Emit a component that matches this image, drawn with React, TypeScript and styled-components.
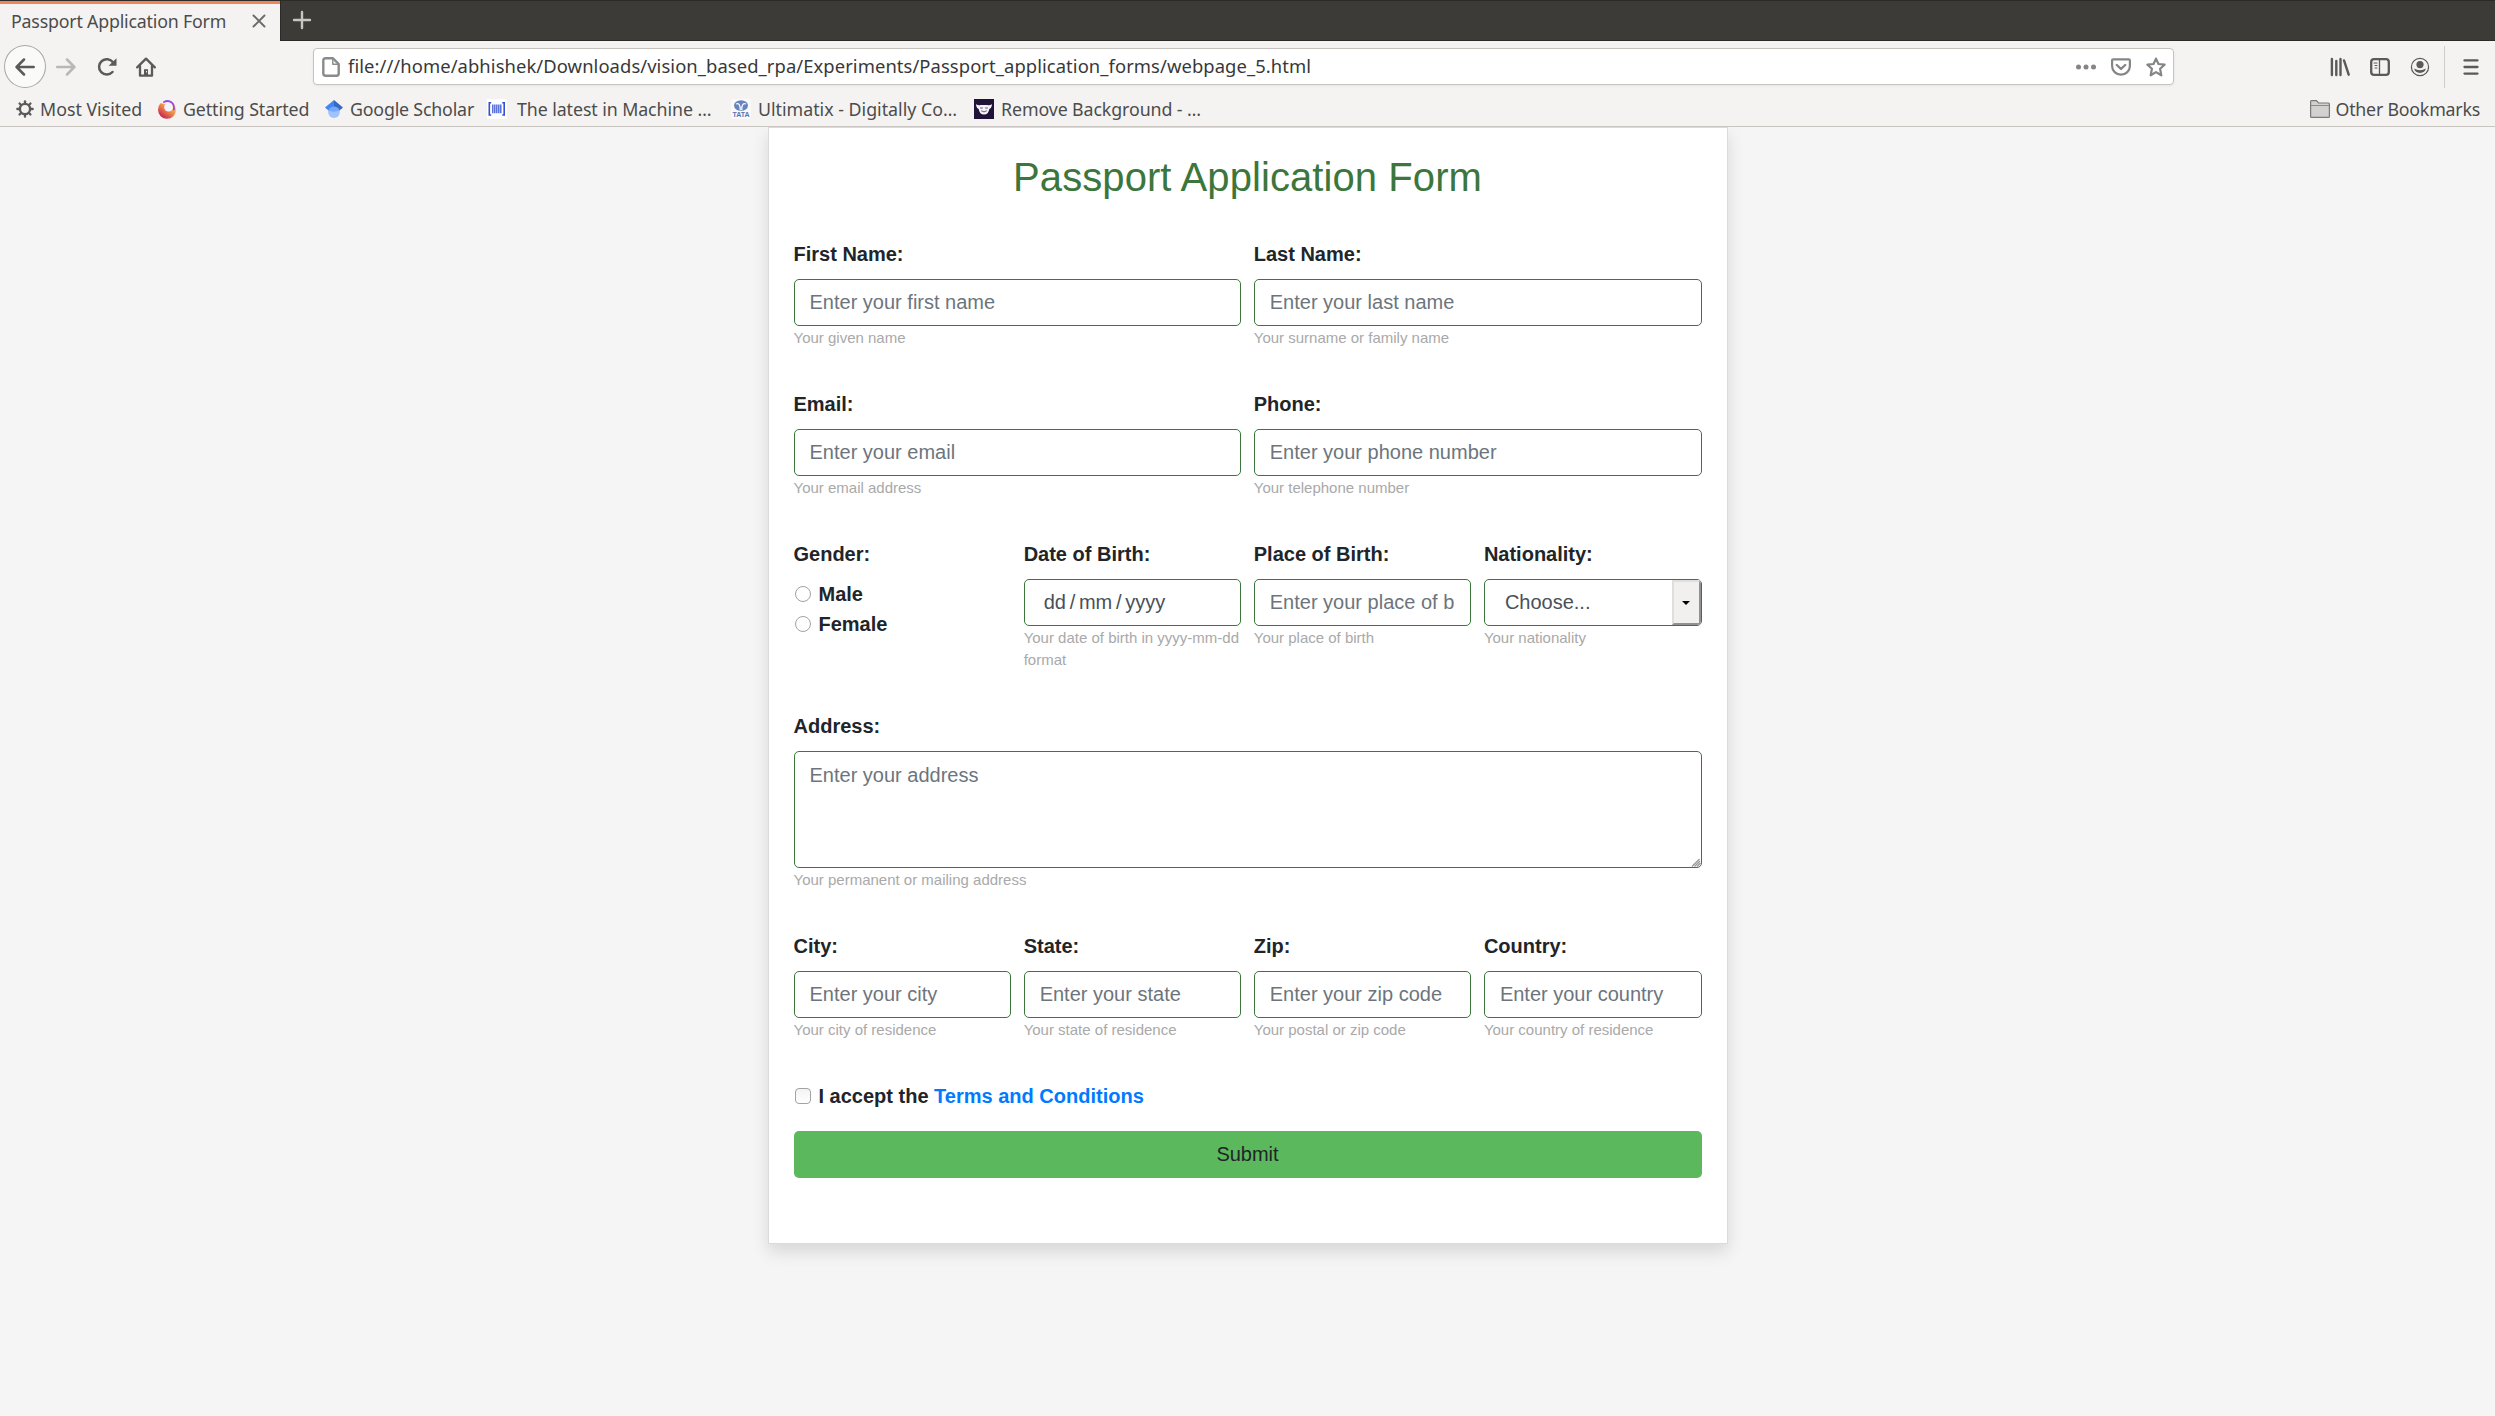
import React from 'react';
import styled, { createGlobalStyle, css } from 'styled-components';

const Global = createGlobalStyle`
  * { box-sizing: border-box; }
  body { margin: 0; background: #f5f5f5; font-family: "Liberation Sans", Arial, sans-serif; }
`;

const uiFont = css`font-family: "Noto Sans", "Open Sans", sans-serif;`;

const Window = styled.div`
  width: 2495px; height: 1416px; display: flex; flex-direction: column; overflow: hidden; background: #f5f5f5;
`;
const TabStrip = styled.div`
  height: 41px; flex: none; display: flex; background: #3c3b37; border-top: 1px solid #2c2b28; border-bottom: 1px solid #2b2a27;
`;
const Tab = styled.div`
  ${uiFont}
  width: 280px; height: 40px; margin-bottom: -1px; background: #f4f3f2; border-top: 3px solid #f0825c;
  display: flex; align-items: center; justify-content: space-between; padding: 0 14px 4px 11px;
  color: #4c4c4c; font-size: 17.8px; white-space: nowrap;
`;
const NewTab = styled.div`
  width: 42px; display: flex; justify-content: center; align-items: center; border-left: 1px solid #2b2a27; padding: 0 0 1px 0;
`;
const NavBar = styled.div`
  height: 51px; flex: none; display: flex; align-items: center; background: #f4f3f2;
`;
const NavButtons = styled.div`
  width: 313px; display: flex; align-items: center; padding-left: 4px;
`;
const BackButton = styled.div`
  width: 42px; height: 43px; border: 1px solid #a9a8a6; border-radius: 50%; background: #fafaf9;
  display: flex; align-items: center; justify-content: center;
`;
const NavIcon = styled.div<{ $left: number }>`
  display: flex; margin-left: ${p => p.$left}px;
`;
const UrlBar = styled.div`
  ${uiFont}
  width: 1861px; height: 37px; border: 1px solid #c6c3bf; border-radius: 4px; background: #fff;
  box-shadow: 0 1px 3px rgba(0,0,0,.06); display: flex; align-items: center; padding: 0 7px 0 8px; color: #38383a;
`;
const UrlText = styled.span`
  flex: 1; padding: 0 0 2px 8px; font-size: 18.4px; letter-spacing: .08px; white-space: nowrap;
`;
const UrlActions = styled.div`display: flex; align-items: center; gap: 15px;`;
const Tools = styled.div`
  flex: 1; display: flex; align-items: center; justify-content: flex-end; padding-right: 16px;
`;
const Divider = styled.div`width: 1px; height: 42px; background: #cfcdca; margin: 0 18px 0 14px;`;
const BookmarkBar = styled.div`
  ${uiFont}
  height: 35px; flex: none; background: #f4f3f2; border-bottom: 1px solid #c8c4c0;
  display: flex; align-items: center; padding: 0 15px 0 16px; color: #4c4c4c; font-size: 17.8px; white-space: nowrap;
`;
const Bookmark = styled.div<{ $w?: number; $gap: number }>`
  display: flex; align-items: center; gap: ${p => p.$gap}px; ${p => (p.$w ? `width: ${p.$w}px;` : 'margin-left: auto;')}
`;
const ChromeText = styled.span<{ $ls: number }>`letter-spacing: ${p => p.$ls}px; line-height: 24px;`;

const Viewport = styled.main`flex: 1; display: flex; justify-content: center; align-items: flex-start; overflow: hidden;`;
const Form = styled.form`
  width: 960px; height: 1117px; background: #fff; border: 1px solid #dadada; padding: 25px;
  box-shadow: 0 8px 16px rgba(0,0,0,.12); color: #212529; font-size: 20px; line-height: 30px;
`;
const Title = styled.h1`
  margin: 0 0 38px; font-size: 40px; line-height: 48px; font-weight: 400; letter-spacing: .08px; color: #3c763d; text-align: center;
`;
const Row = styled.div<{ $cols: number; $after?: number }>`
  display: grid; grid-template-columns: repeat(${p => p.$cols}, minmax(0, 1fr)); column-gap: 12.5px;
  margin-bottom: ${p => p.$after ?? 40}px;
`;
const Group = styled.div`display: flex; flex-direction: column;`;
const Label = styled.label`font-weight: 700; margin-bottom: 10px;`;
const field = css`
  width: 100%; border: 1px solid #3c763d; border-radius: 5px; background: #fff; color: #495057;
  font: 20px/30px "Liberation Sans", Arial, sans-serif; padding: 7.5px 15px; outline: none; display: block;
  &::placeholder { color: #6c757d; opacity: 1; }
`;
const Input = styled.input`${field} height: 47px;`;
const DateField = styled.div`${field} height: 47px; padding: 7px 19px; white-space: pre; word-spacing: -1.8px;`;
const AreaWrap = styled.div`position: relative; display: flex;`;
const TextArea = styled.textarea`${field} height: 117px; resize: none;`;
const Grip = styled.svg`position: absolute; right: 1px; bottom: 1px;`;
const SelectField = styled.div`
  ${field} height: 47px; padding: 0 0 0 20px; display: flex; align-items: center; justify-content: space-between; overflow: hidden;
`;
const SelectValue = styled.span`padding-bottom: 1px;`;
const SelectArrow = styled.div`
  width: 29px; height: 100%; background: #f1f0ef; border: 2px solid; border-color: #e0dfde #919191 #919191 #e0dfde;
  display: flex; align-items: center; justify-content: center;
`;
const Help = styled.small`font-size: 15px; line-height: 22.5px; margin-top: .5px; color: #a9a9a9;`;
const Choice = styled.label`display: flex; align-items: center; font-weight: 700; height: 30px; gap: 8px; padding-left: 1px;`;
const Box = styled.input<{ $round?: boolean }>`
  appearance: none; margin: 0; width: 16px; height: 16px; flex: none; border: 1px solid #a2a2a2;
  border-radius: ${p => (p.$round ? '50%' : '4px')};
  background: ${p => (p.$round ? '#fff' : 'linear-gradient(#f3f3f3, #fff)')};
`;
const Link = styled.a`color: #007bff; text-decoration: none;`;
const Submit = styled.button`
  display: block; width: 100%; height: 47px; margin-top: 20px; padding: 0 0 1px; border: 0; border-radius: 5px; background: #5cb85c;
  color: #212529; font: 20px/30px "Liberation Sans", Arial, sans-serif;
`;

type FieldProps = { label: string; help: string; placeholder?: string; children?: React.ReactNode };
const Field = ({ label, help, placeholder, children }: FieldProps) => (
  <Group>
    <Label>{label}</Label>
    {children ?? <Input placeholder={placeholder} />}
    <Help>{help}</Help>
  </Group>
);

const stroke = (color: string, w = 2.4) => ({
  fill: 'none', stroke: color, strokeWidth: w, strokeLinecap: 'round' as const, strokeLinejoin: 'round' as const,
});
const DARK = '#5a5a58';
const GREY = '#858585';

const CloseIcon = () => <svg width="14" height="14" viewBox="0 0 14 14"><path d="M1.500 1.500l11 11M12.500 1.500L1.500 12.500" {...stroke('#6a6a69', 1.9)} /></svg>;
const PlusIcon = () => <svg width="20" height="20" viewBox="0 0 20 20"><path d="M10 2v16M2 10h16" {...stroke('#c9c5c0', 2.4)} /></svg>;
const BackIcon = () => <svg width="20" height="20" viewBox="0 0 20 20"><path d="M18.7 10H1.8M9 2.5L1.6 10L9 17.5" {...stroke(DARK, 2.5)} /></svg>;
const ForwardIcon = () => <svg width="20" height="20" viewBox="0 0 20 20"><path d="M1.2 10H18M11 2.5L18.4 10L11 17.5" {...stroke('#b9b8b6', 2.5)} /></svg>;
const ReloadIcon = () => (
  <svg width="20" height="20" viewBox="0 0 20 20">
    <path d="M15.5 15A7.7 7.7 0 1 1 16 5.3" {...stroke(DARK, 2.5)} />
    <path d="M19.5 1.2V8.8H11.6z" fill={DARK} />
  </svg>
);
const HomeIcon = () => (
  <svg width="20" height="20" viewBox="0 0 20 20">
    <path d="M1.2 10.4L10 1.6L18.8 10.4" {...stroke(DARK, 2.3)} />
    <path d="M4 9V18.7H16V9" {...stroke(DARK, 2.3)} />
    <path d="M8 18V12.2h4V18z" fill={DARK} /><rect x="10" y="14" width="1" height="1.4" fill="#f4f3f2" />
  </svg>
);
const PageIcon = () => (
  <svg width="18" height="20" viewBox="0 0 18 20">
    <path d="M3.5 1.3H11L16.7 7V16.5Q16.7 18.7 14.5 18.7H3.5Q1.3 18.7 1.3 16.5V3.5Q1.3 1.3 3.5 1.3z" {...stroke('#8a8a8a', 2.4)} />
    <path d="M10.8 2V7.2H16" {...stroke('#8a8a8a', 1.4)} />
  </svg>
);
const DotsIcon = () => <svg width="20" height="20" viewBox="0 0 20 20" fill={GREY}><circle cx="2.5" cy="10" r="2.5" /><circle cx="10" cy="10" r="2.5" /><circle cx="17.5" cy="10" r="2.5" /></svg>;
const PocketIcon = () => (
  <svg width="20" height="20" viewBox="0 0 20 20">
    <path d="M2.3 2.3H17.7Q18.9 2.3 18.9 3.5V9A8.9 8.7 0 0 1 1.1 9V3.5Q1.1 2.3 2.3 2.3z" {...stroke(GREY, 2.2)} />
    <path d="M5.8 8L10 12L14.2 8" {...stroke(GREY, 2.4)} />
  </svg>
);
const StarIcon = () => <svg width="20" height="20" viewBox="0 0 20 20"><path d="M10 1.6L12.5 7L18.6 7.7L14.1 11.7L15.3 18.3L10 15.1L4.7 18.3L5.9 11.7L1.4 7.7L7.5 7z" {...stroke(GREY, 2.2)} /></svg>;
const LibraryIcon = () => <svg width="20" height="20" viewBox="0 0 20 20"><path d="M1.9 2V18M6.300 4V18M10.500 2V18M14 3.4L18.7 17.7" {...stroke(DARK, 2.4)} /></svg>;
const SidebarIcon = () => (
  <svg width="20" height="20" viewBox="0 0 20 20">
    <rect x="1.2" y="2.2" width="17.6" height="15.6" rx="2.8" {...stroke(DARK, 2.3)} />
    <path d="M9.500 2V18" {...stroke(DARK, 1.3)} /><path d="M4 6H7M5 8.5H7M5 11H7" {...stroke(DARK, 1.1)} />
  </svg>
);
const AccountIcon = () => (
  <svg width="20" height="20" viewBox="0 0 20 20">
    <circle cx="10" cy="10" r="8.6" {...stroke(DARK, 1.2)} /><circle cx="10" cy="7.6" r="3.6" fill={DARK} />
    <path d="M4.2 11.6Q7 13.2 10 13.2T15.8 11.6Q15 15.9 10 15.9T4.2 11.6z" fill={DARK} />
  </svg>
);
const MenuIcon = () => <svg width="16" height="18" viewBox="0 0 16 18"><path d="M1.5 2.4H14.5M1.5 9H14.5M1.5 15.6H14.5" {...stroke(DARK, 2.3)} /></svg>;
const GearIcon = () => (
  <svg width="18" height="18" viewBox="0 0 18 18">
    <circle cx="9" cy="9" r="5.1" {...stroke(DARK, 2.4)} />
    <g {...stroke(DARK, 2.3)}>
      {[0, 45, 90, 135, 180, 225, 270, 315].map(a => <path key={a} d="M9 1.3V3" transform={`rotate(${a} 9 9)`} />)}
    </g>
  </svg>
);
const FirefoxIcon = () => (
  <svg width="19" height="19" viewBox="0 0 19 19">
    <defs>
      <linearGradient id="fx" x1="0.9" y1="0.1" x2="0.2" y2="0.9">
        <stop offset="0" stopColor="#ffd84a" /><stop offset=".45" stopColor="#f08a4b" /><stop offset="1" stopColor="#c8234f" />
      </linearGradient>
    </defs>
    <g transform="translate(1 0)">
      <path d="M2.400 3.200Q0 6 0 9.800A9 9 0 0 0 18 9.800Q18 6 15.600 3.400L7 4.500L5 3.600z" fill="url(#fx)" />
      <circle cx="10.600" cy="7.200" r="4.400" fill="#f6f2fb" />
      <path d="M6 2Q10 -.2 13.700 2.400Q16.800 5 15.800 9.500" {...stroke('#9a45e8', 1.8)} />
    </g>
  </svg>
);
const ScholarIcon = () => (
  <svg width="18" height="18" viewBox="0 0 18 18">
    <circle cx="9" cy="12" r="5.900" fill="#a0c3ff" /><path d="M0 7.600L9 0V9.500L3.500 10.500z" fill="#4285f4" />
    <path d="M18 7.600L9 0V9L14.500 10.500z" fill="#356ac3" /><path d="M3.500 10A6 6 0 0 1 14.500 10A8 6 0 0 1 3.500 10z" fill="#76a7fa" />
  </svg>
);
const BarsIcon = () => (
  <svg width="20" height="20" viewBox="0 0 20 20">
    <rect width="20" height="20" fill="#fff" />
    <path d="M4.200 3.800H2.300V16H4.200M15.300 3.800H17.200V16H15.300" fill="none" stroke="#3350d4" strokeWidth="1.600" />
    <path d="M5.800 5.500V14.300M7.800 5.500V14.300M9.800 5.500V14.300M11.800 5.500V14.300M13.800 5.500V14.300" stroke="#4a64d8" strokeWidth="1.400" />
  </svg>
);
const TataGlyph = styled.div`
  width: 20px; height: 20px; background: #fafafa; border-radius: 2px; display: flex; flex-direction: column; align-items: center;
`;
const TataText = styled.span`font: 700 7px/6px "Liberation Sans", Arial, sans-serif; color: #5576b5;`;
const TataIcon = () => (
  <TataGlyph>
    <svg width="16" height="13" viewBox="0 0 16 13">
      <ellipse cx="8" cy="6.500" rx="7" ry="5.300" fill="#6585bf" />
      <path d="M3 5Q7.300 3.200 7.300 11M13 5Q8.700 3.200 8.700 11" fill="none" stroke="#f5f7fb" strokeWidth="1.300" />
    </svg>
    <TataText>TATA</TataText>
  </TataGlyph>
);
const MaskIcon = () => (
  <svg width="20" height="20" viewBox="0 0 20 20">
    <rect width="20" height="20" fill="#21123a" />
    <path d="M2 5.200Q5 7 6.500 6H13.500Q15 7 18 5.200Q17.500 9.500 15.300 10Q14.500 15.500 10 15.500T4.700 10Q2.500 9.500 2 5.200z" fill="#f5f3f7" />
    <path d="M6.500 9H8.500M11.500 9H13.500M7.500 12Q10 14 12.500 12" {...stroke('#5a4a70', 0.9)} />
  </svg>
);
const FolderIcon = () => (
  <svg width="20" height="18" viewBox="0 0 20 18">
    <path d="M.6 16.500V1.500Q.6.600 1.500.600H6.500L8.500 3H18.500Q19.400 3 19.400 4V16.500Q19.400 17.400 18.500 17.400H1.500Q.6 17.400.6 16.500z" fill="#d2d1cf" stroke="#7a7a7a" strokeWidth="1.200" />
    <path d="M1 5.500H19" stroke="#8b8b8b" strokeWidth="1" />
  </svg>
);

const bookmarks = [
  { text: 'Most Visited', icon: <GearIcon />, w: 141, gap: 6, ls: 0 },
  { text: 'Getting Started', icon: <FirefoxIcon />, w: 168, gap: 7, ls: -0.1 },
  { text: 'Google Scholar', icon: <ScholarIcon />, w: 162, gap: 7, ls: -0.18 },
  { text: 'The latest in Machine …', icon: <BarsIcon />, w: 244, gap: 10, ls: -0.08 },
  { text: 'Ultimatix - Digitally Co…', icon: <TataIcon />, w: 243, gap: 7, ls: 0 },
  { text: 'Remove Background - …', icon: <MaskIcon />, w: 250, gap: 7, ls: -0.1 },
];

export default function App() {
  return (
    <Window>
      <Global />
      <TabStrip>
        <Tab><ChromeText $ls={-0.2}>Passport Application Form</ChromeText><CloseIcon /></Tab>
        <NewTab><PlusIcon /></NewTab>
      </TabStrip>
      <NavBar>
        <NavButtons>
          <BackButton><BackIcon /></BackButton>
          <NavIcon $left={10}><ForwardIcon /></NavIcon>
          <NavIcon $left={21}><ReloadIcon /></NavIcon>
          <NavIcon $left={19}><HomeIcon /></NavIcon>
        </NavButtons>
        <UrlBar>
          <PageIcon />
          <UrlText>file:///home/abhishek/Downloads/vision_based_rpa/Experiments/Passport_application_forms/webpage_5.html</UrlText>
          <UrlActions><DotsIcon /><PocketIcon /><StarIcon /></UrlActions>
        </UrlBar>
        <Tools>
          <LibraryIcon />
          <NavIcon $left={20}><SidebarIcon /></NavIcon>
          <NavIcon $left={20}><AccountIcon /></NavIcon>
          <Divider />
          <MenuIcon />
        </Tools>
      </NavBar>
      <BookmarkBar>
        {bookmarks.map(b => (
          <Bookmark key={b.text} $w={b.w} $gap={b.gap}>{b.icon}<ChromeText $ls={b.ls}>{b.text}</ChromeText></Bookmark>
        ))}
        <Bookmark $gap={5}><FolderIcon /><ChromeText $ls={-0.22}>Other Bookmarks</ChromeText></Bookmark>
      </BookmarkBar>
      <Viewport>
        <Form>
          <Title>Passport Application Form</Title>
          <Row $cols={2}>
            <Field label="First Name:" placeholder="Enter your first name" help="Your given name" />
            <Field label="Last Name:" placeholder="Enter your last name" help="Your surname or family name" />
          </Row>
          <Row $cols={2}>
            <Field label="Email:" placeholder="Enter your email" help="Your email address" />
            <Field label="Phone:" placeholder="Enter your phone number" help="Your telephone number" />
          </Row>
          <Row $cols={4} $after={39.5}>
            <Group>
              <Label as="span">Gender:</Label>
              <Choice><Box type="radio" name="gender" $round />Male</Choice>
              <Choice><Box type="radio" name="gender" $round />Female</Choice>
            </Group>
            <Field label="Date of Birth:" help="Your date of birth in yyyy-mm-dd format">
              <DateField>dd / mm / yyyy</DateField>
            </Field>
            <Field label="Place of Birth:" placeholder="Enter your place of birth" help="Your place of birth" />
            <Field label="Nationality:" help="Your nationality">
              <SelectField>
                <SelectValue>Choose...</SelectValue>
                <SelectArrow><svg width="8" height="4" viewBox="0 0 8 4"><path d="M0 0H8L4 4z" fill="#000" /></svg></SelectArrow>
              </SelectField>
            </Field>
          </Row>
          <Row $cols={1}>
            <Field label="Address:" help="Your permanent or mailing address">
              <AreaWrap>
                <TextArea placeholder="Enter your address" />
                <Grip width="10" height="9" viewBox="0 0 10 9">
                  <path d="M1 8.500L8.500 1M3.500 8.500L9 3M6 8.500L9.500 5" stroke="#9a9a9a" strokeWidth="1.300" />
                </Grip>
              </AreaWrap>
            </Field>
          </Row>
          <Row $cols={4}>
            <Field label="City:" placeholder="Enter your city" help="Your city of residence" />
            <Field label="State:" placeholder="Enter your state" help="Your state of residence" />
            <Field label="Zip:" placeholder="Enter your zip code" help="Your postal or zip code" />
            <Field label="Country:" placeholder="Enter your country" help="Your country of residence" />
          </Row>
          <Choice><Box type="checkbox" /><span>I accept the <Link href="#">Terms and Conditions</Link></span></Choice>
          <Submit type="button">Submit</Submit>
        </Form>
      </Viewport>
    </Window>
  );
}
